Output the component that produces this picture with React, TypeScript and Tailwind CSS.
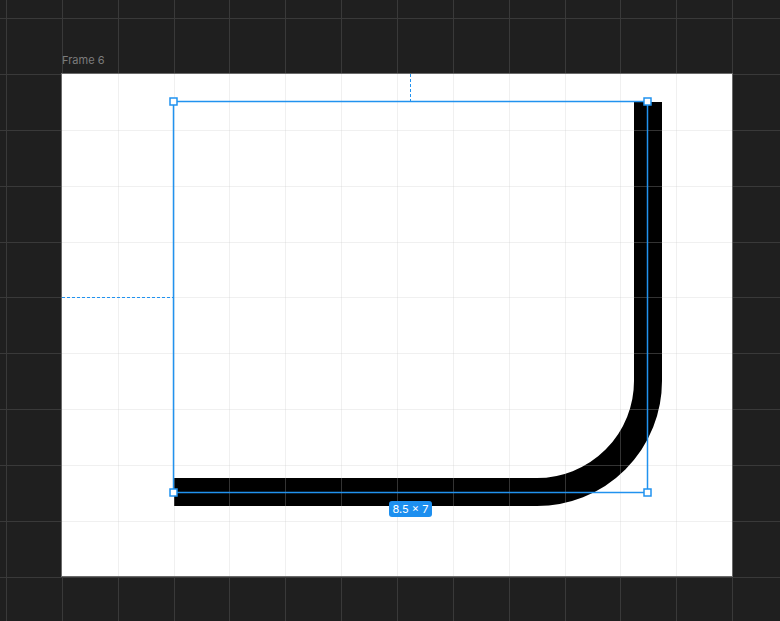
const STEP = 55.85;
const X0 = 6;
const Y0 = 18.15;

const range = (start: number, end: number) => {
  const out: number[] = [];
  for (let v = start; v <= end; v += STEP) out.push(Math.round(v) + 0.5);
  return out;
};

const colsAll = range(X0, 780);
const rowsAll = range(Y0, 621);

// frame bounds on the canvas
const frame = { x: 62, y: 74, w: 670, h: 502 };
const sel = { x: 173.5, y: 101.5, r: 647.5, b: 492.5 };

const Handle = ({ x, y }: { x: number; y: number }) => (
  <rect x={x - 3.5} y={y - 3.5} width={7} height={7} fill="#fff" stroke="#2192ef" strokeWidth={1.5} />
);

export default function App() {
  return (
    <div className="relative w-[780px] h-[621px] overflow-hidden bg-[#1f1f1f] font-['Inter','Noto_Sans',sans-serif]">
      <svg className="absolute inset-0" width={780} height={621}>
        {/* outer canvas grid */}
        {colsAll.map((x) => (
          <line key={`c${x}`} x1={x} y1={0} x2={x} y2={621} stroke="#393939" strokeWidth={1} />
        ))}
        {rowsAll.map((y) => (
          <line key={`r${y}`} x1={0} y1={y} x2={780} y2={y} stroke="#393939" strokeWidth={1} />
        ))}

        {/* frame */}
        <rect x={frame.x} y={frame.y} width={frame.w} height={frame.h} fill="#fff" />

        {/* shape */}
        <path
          d="M648 102 V381 A111 111 0 0 1 537 492 H174"
          fill="none"
          stroke="#000"
          strokeWidth={28}
        />

        {/* inner grid, drawn over content */}
        <g stroke="rgba(196,196,196,0.26)" strokeWidth={1}>
          {colsAll
            .filter((x) => x > frame.x + 1 && x < frame.x + frame.w - 1)
            .map((x) => (
              <line key={`ic${x}`} x1={x} y1={frame.y} x2={x} y2={frame.y + frame.h} />
            ))}
          {rowsAll
            .filter((y) => y > frame.y + 1 && y < frame.y + frame.h - 1)
            .map((y) => (
              <line key={`ir${y}`} x1={frame.x} y1={y} x2={frame.x + frame.w} y2={y} />
            ))}
        </g>
        <rect x={frame.x - 0.5} y={frame.y - 0.5} width={frame.w + 1} height={frame.h + 1} fill="none" stroke="#6a6a6a" strokeWidth={1} />

        {/* distance guides */}
        <line x1={410.5} y1={frame.y} x2={410.5} y2={sel.y} stroke="#2192ef" strokeWidth={1} strokeDasharray="3 2" />
        <line x1={frame.x} y1={297.5} x2={sel.x} y2={297.5} stroke="#2192ef" strokeWidth={1} strokeDasharray="3 2" />

        {/* selection */}
        <rect
          x={sel.x}
          y={sel.y}
          width={sel.r - sel.x}
          height={sel.b - sel.y}
          fill="none"
          stroke="#2192ef"
          strokeWidth={1.5}
        />
        <Handle x={sel.x} y={sel.y} />
        <Handle x={sel.r} y={sel.y} />
        <Handle x={sel.x} y={sel.b} />
        <Handle x={sel.r} y={sel.b} />
      </svg>

      <div className="absolute left-[62px] top-[53px] text-[11px] leading-[14px] text-[#7c7c7c]">Frame 6</div>

      <div className="absolute left-[389px] top-[501px] w-[43px] h-[16px] rounded-[3px] bg-[#1d8fef] text-white text-[11px] leading-[16px] flex items-center justify-center">
        8.5 × 7
      </div>
    </div>
  );
}
